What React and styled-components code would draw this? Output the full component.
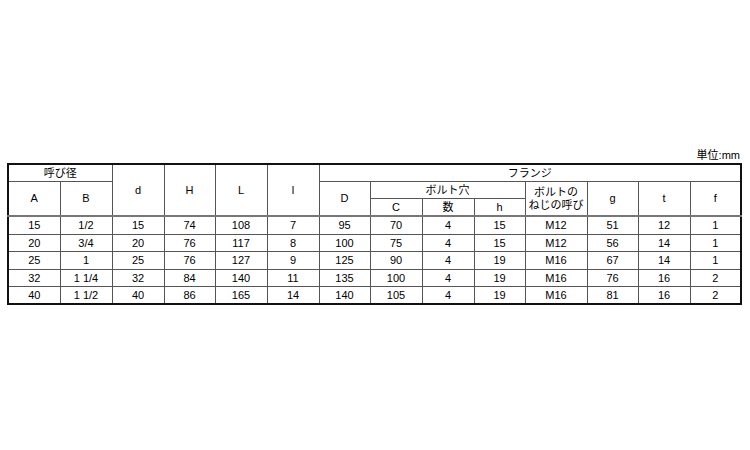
import React from 'react';
import styled, { createGlobalStyle } from 'styled-components';

const GlobalStyle = createGlobalStyle`
  html, body {
    margin: 0;
    padding: 0;
    background: #fff;
  }
  body {
    font-family: 'Liberation Sans', Arial, 'Noto Sans CJK JP', sans-serif;
    color: #000;
  }
`;

const Page = styled.div`
  width: 750px;
  height: 450px;
  padding: 148px 0 0 7px;
  box-sizing: border-box;
`;

const Unit = styled.div`
  width: 733px;
  text-align: right;
  font-size: 11px;
  line-height: 14px;
  height: 15px;
  font-family: 'Liberation Sans', 'Noto Sans CJK JP', sans-serif;
`;

const Table = styled.table`
  width: 733px;
  table-layout: fixed;
  border-collapse: collapse;
  border: 2px solid #111;
  font-size: 11px;
  font-family: 'Liberation Sans', 'Noto Sans CJK JP', sans-serif;
`;

const Cell = styled.td`
  border: 1px solid #555;
  padding: 0;
  text-align: center;
  vertical-align: middle;
  line-height: 13px;
  height: ${(p) => (p.$h ? p.$h : 16)}px;
  white-space: nowrap;
`;

const HeadRow = styled.tr`
  border-bottom: ${(p) => (p.$last ? '2px solid #777' : 'none')};
`;

const widths = [52, 52, 52, 51, 52, 52, 51, 52, 52, 51, 62, 51, 52, 51];
const rowHeights = [17, 16, 17, 16, 16];

const rows = [
  ['15', '1/2', '15', '74', '108', '7', '95', '70', '4', '15', 'M12', '51', '12', '1'],
  ['20', '3/4', '20', '76', '117', '8', '100', '75', '4', '15', 'M12', '56', '14', '1'],
  ['25', '1', '25', '76', '127', '9', '125', '90', '4', '19', 'M16', '67', '14', '1'],
  ['32', '1 1/4', '32', '84', '140', '11', '135', '100', '4', '19', 'M16', '76', '16', '2'],
  ['40', '1 1/2', '40', '86', '165', '14', '140', '105', '4', '19', 'M16', '81', '16', '2'],
];

export default function App() {
  return (
    <>
      <GlobalStyle />
      <Page>
        <Unit>単位:mm</Unit>
        <Table>
          <colgroup>
            {widths.map((w, i) => (
              <col key={i} style={{ width: w }} />
            ))}
          </colgroup>
          <thead>
            <HeadRow>
              <Cell colSpan={2}>呼び径</Cell>
              <Cell rowSpan={3}>d</Cell>
              <Cell rowSpan={3}>H</Cell>
              <Cell rowSpan={3}>L</Cell>
              <Cell rowSpan={3}>l</Cell>
              <Cell colSpan={8}>フランジ</Cell>
            </HeadRow>
            <HeadRow>
              <Cell rowSpan={2}>A</Cell>
              <Cell rowSpan={2}>B</Cell>
              <Cell rowSpan={2}>D</Cell>
              <Cell colSpan={3}>ボルト穴</Cell>
              <Cell rowSpan={2}>
                ボルトの
                <br />
                ねじの呼び
              </Cell>
              <Cell rowSpan={2}>g</Cell>
              <Cell rowSpan={2}>t</Cell>
              <Cell rowSpan={2}>f</Cell>
            </HeadRow>
            <HeadRow $last>
              <Cell>C</Cell>
              <Cell>数</Cell>
              <Cell>h</Cell>
            </HeadRow>
          </thead>
          <tbody>
            {rows.map((r, i) => (
              <tr key={i}>
                {r.map((v, j) => (
                  <Cell key={j} $h={rowHeights[i]}>
                    {v}
                  </Cell>
                ))}
              </tr>
            ))}
          </tbody>
        </Table>
      </Page>
    </>
  );
}
